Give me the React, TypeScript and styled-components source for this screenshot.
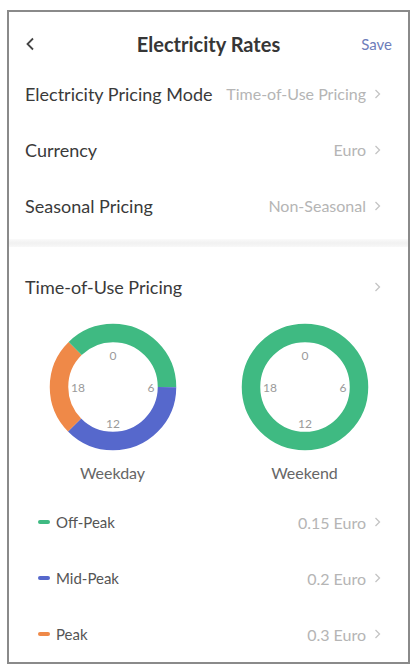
import React from "react";
import styled, { createGlobalStyle } from "styled-components";

const GlobalStyle = createGlobalStyle`
  html, body {
    margin: 0;
    padding: 0;
    background: #ffffff;
  }
  body {
    font-family: Lato, "Noto Sans", "Liberation Sans", sans-serif;
  }
`;

const GREEN = "#3fba82";
const BLUE = "#5668cc";
const ORANGE = "#ef8948";

const Page = styled.div`
  width: 412px;
  height: 665px;
  box-sizing: border-box;
  padding: 10px 2px 1px 7px;
  background: #ffffff;
`;

const Frame = styled.div`
  height: 100%;
  box-sizing: border-box;
  border: 2px solid #8a8a8a;
  display: flex;
  flex-direction: column;
  overflow: hidden;
`;

const Header = styled.div`
  display: grid;
  grid-template-columns: 1fr auto 1fr;
  align-items: center;
  height: 44px;
  margin-top: 10px;
  padding: 0 16px;
`;

const BackButton = styled.button`
  justify-self: start;
  border: none;
  background: none;
  padding: 0;
  display: flex;
  align-items: center;
`;

const Title = styled.h1`
  margin: 0;
  font-size: 20px;
  font-weight: 700;
  color: #363636;
`;

const SaveButton = styled.button`
  justify-self: end;
  border: none;
  background: none;
  padding: 0;
  font-family: inherit;
  font-size: 15px;
  color: #6d7dba;
`;

const Row = styled.div<{ $gap?: number }>`
  height: 56px;
  flex-shrink: 0;
  box-sizing: border-box;
  display: flex;
  align-items: center;
  justify-content: space-between;
  padding: 1px 27px 0 16px;
  margin-top: ${(p) => p.$gap ?? 0}px;
`;

const Label = styled.span`
  font-size: 18px;
  color: #3a3a3a;
`;

const ValueWrap = styled.span`
  display: flex;
  align-items: center;
  gap: 8px;
`;

const Value = styled.span`
  font-size: 16px;
  color: #b5b5b5;
`;

const Divider = styled.div`
  height: 8px;
  margin-top: 6px;
  flex-shrink: 0;
  background: linear-gradient(#fafafa, #f1f1f1 50%, #f8f8f8);
`;

const Charts = styled.div`
  display: grid;
  grid-template-columns: 192px 192px;
  justify-content: center;
  margin-top: 8px;
`;

const Chart = styled.div`
  display: flex;
  flex-direction: column;
  align-items: center;
`;

const ChartLabel = styled.span`
  margin-top: 11px;
  font-size: 16px;
  line-height: 20px;
  color: #666666;
`;

const LegendRow = styled.div`
  height: 56px;
  flex-shrink: 0;
  display: flex;
  align-items: center;
  justify-content: space-between;
  padding: 0 27px 0 29px;
`;

const LegendName = styled.span`
  display: flex;
  align-items: center;
  gap: 6px;
  font-size: 15px;
  color: #555555;
`;

const Marker = styled.i<{ $color: string }>`
  display: block;
  width: 12px;
  height: 4px;
  border-radius: 2px;
  background: ${(p) => p.$color};
`;

const Spacer = styled.div`
  height: 11px;
  flex-shrink: 0;
`;

const Chevron = () => (
  <svg width="7" height="10" viewBox="0 0 7 10">
    <polyline points="1.5,1 5.5,5 1.5,9" fill="none" stroke="#c4c4c4" strokeWidth="1.3" />
  </svg>
);

const BackIcon = () => (
  <svg width="10" height="14" viewBox="0 0 10 14">
    <polyline points="8,1.5 2.5,7 8,12.5" fill="none" stroke="#444" strokeWidth="1.8" />
  </svg>
);

type Segment = { from: number; to: number; color: string };

const R = 54;
const C = 2 * Math.PI * R;

const Donut = ({ segments }: { segments: Segment[] }) => (
  <svg width="130" height="130" viewBox="0 0 130 130">
    <g transform="rotate(-90 65 65)">
      {segments.map((s, i) => {
        const len = ((s.to - s.from) / 24) * C;
        return (
          <circle
            key={i}
            cx="65"
            cy="65"
            r={R}
            fill="none"
            stroke={s.color}
            strokeWidth="18.5"
            strokeDasharray={`${len} ${C - len}`}
            strokeDashoffset={-(s.from / 24) * C}
          />
        );
      })}
    </g>
    <g fontFamily="Lato, sans-serif" fontSize="12" fill="#9a9a9a" textAnchor="middle" dominantBaseline="central">
      <text x="65" y="33">0</text>
      <text x="103" y="65">6</text>
      <text x="65" y="101">12</text>
      <text x="30" y="65">18</text>
    </g>
  </svg>
);

const weekday: Segment[] = [
  { from: 0, to: 6, color: GREEN },
  { from: 6, to: 15, color: BLUE },
  { from: 15, to: 21, color: ORANGE },
  { from: 21, to: 24, color: GREEN },
];

const weekend: Segment[] = [{ from: 0, to: 24, color: GREEN }];

const settings = [
  { label: "Electricity Pricing Mode", value: "Time-of-Use Pricing" },
  { label: "Currency", value: "Euro" },
  { label: "Seasonal Pricing", value: "Non-Seasonal" },
];

const rates = [
  { name: "Off-Peak", price: "0.15 Euro", color: GREEN },
  { name: "Mid-Peak", price: "0.2 Euro", color: BLUE },
  { name: "Peak", price: "0.3 Euro", color: ORANGE },
];

export default function App() {
  return (
    <Page>
      <GlobalStyle />
      <Frame>
        <Header>
          <BackButton>
            <BackIcon />
          </BackButton>
          <Title>Electricity Rates</Title>
          <SaveButton>Save</SaveButton>
        </Header>

        {settings.map((s) => (
          <Row key={s.label}>
            <Label>{s.label}</Label>
            <ValueWrap>
              <Value>{s.value}</Value>
              <Chevron />
            </ValueWrap>
          </Row>
        ))}

        <Divider />

        <Row $gap={11}>
          <Label>Time-of-Use Pricing</Label>
          <ValueWrap>
            <Chevron />
          </ValueWrap>
        </Row>

        <Charts>
          <Chart>
            <Donut segments={weekday} />
            <ChartLabel>Weekday</ChartLabel>
          </Chart>
          <Chart>
            <Donut segments={weekend} />
            <ChartLabel>Weekend</ChartLabel>
          </Chart>
        </Charts>

        <Spacer />

        {rates.map((r) => (
          <LegendRow key={r.name}>
            <LegendName>
              <Marker $color={r.color} />
              {r.name}
            </LegendName>
            <ValueWrap>
              <Value>{r.price}</Value>
              <Chevron />
            </ValueWrap>
          </LegendRow>
        ))}
      </Frame>
    </Page>
  );
}
